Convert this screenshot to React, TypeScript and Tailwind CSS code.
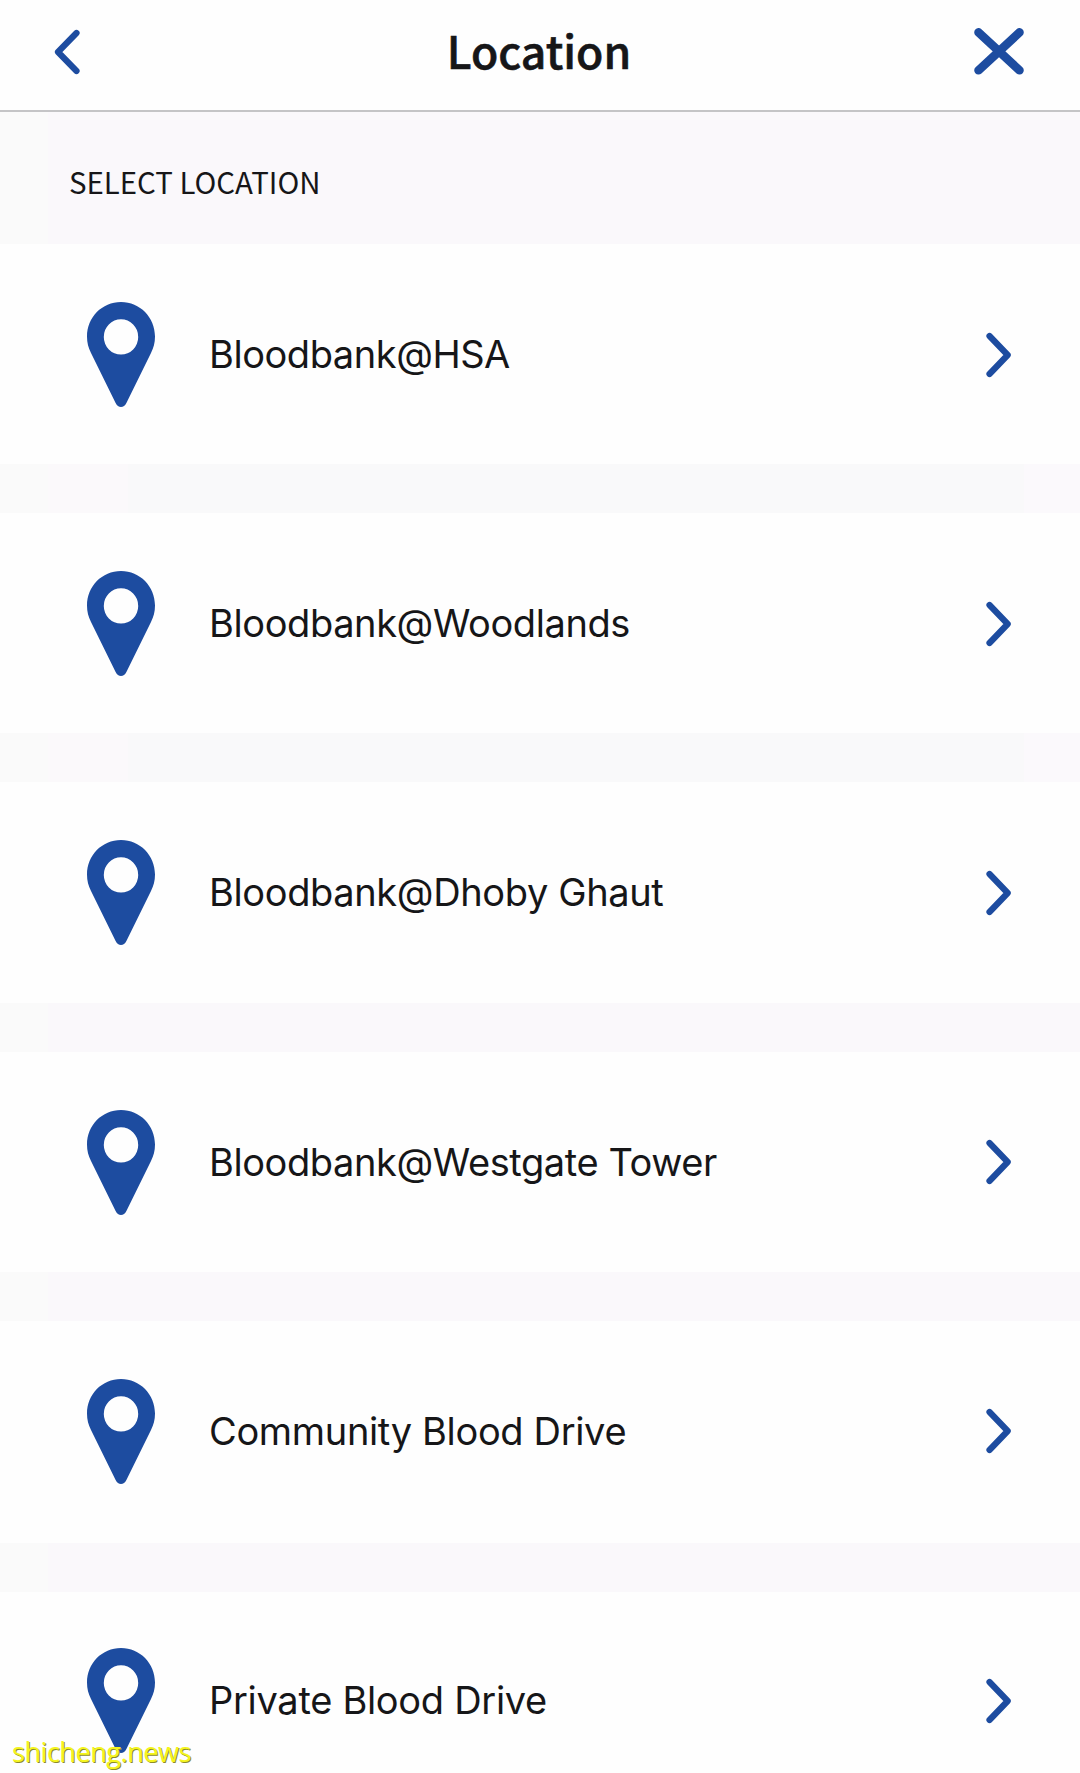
const BLUE = '#1d4ca0'

const LOCATIONS = [
  { name: 'Bloodbank@HSA', spacing: 'tracking-[-0.45px]', gap: 'bg-[linear-gradient(90deg,#fafafa_48px,#fbf9fb_48px,#fbf9fb_128px,#f9f9fa_128px,#f9f9fa_1024px,#fbf9fc_1024px)]' },
  { name: 'Bloodbank@Woodlands', spacing: 'tracking-[-0.4px]', gap: 'bg-[linear-gradient(90deg,#fafafa_48px,#fbf9fb_48px,#fbf9fb_128px,#f9f9fa_128px,#f9f9fa_1024px,#fbf9fc_1024px)]' },
  { name: 'Bloodbank@Dhoby Ghaut', spacing: 'tracking-[-0.37px]', gap: 'bg-[linear-gradient(90deg,#fafafa_48px,#faf8fb_48px)]' },
  { name: 'Bloodbank@Westgate Tower', spacing: 'tracking-[-0.41px]', gap: 'bg-[linear-gradient(90deg,#fafafa_48px,#faf8fb_48px)]' },
  { name: 'Community Blood Drive', spacing: 'tracking-[-0.34px]', gap: 'mt-[2px] bg-[linear-gradient(90deg,#fafafa_48px,#faf8fb_48px)]' },
  { name: 'Private Blood Drive', spacing: 'tracking-[-0.3px]', gap: '' },
]

function PinIcon() {
  return (
    <svg width="68" height="105" viewBox="0 0 68 105" className="mt-px shrink-0" fill={BLUE} fillRule="evenodd">
      <path d="M34 0C15 0 0 15.4 0 34.5C0 41 1.4 45.6 4 51L28.6 101C31 106.3 37 106.3 39.4 101L64 51C66.6 45.6 68 41 68 34.5C68 15.4 53 0 34 0ZM34 17.2A17.2 17.7 0 1 1 34 52.6A17.2 17.7 0 1 1 34 17.2Z" />
    </svg>
  )
}

function Chevron({ left = false }: { left?: boolean }) {
  return (
    <svg width="26" height="46" viewBox="0 0 26 46" className="mt-px shrink-0" fill="none" stroke={BLUE} strokeWidth="6.2" strokeLinecap="round" strokeLinejoin="round">
      <path d={left ? 'M22.5 4L4 23L22.5 42' : 'M3.5 4L21.7 23L3.5 42'} />
    </svg>
  )
}

function CloseIcon() {
  return (
    <svg width="50" height="48" viewBox="0 0 50 48" fill="none" stroke={BLUE} strokeWidth="8.6" strokeLinecap="round">
      <path d="M4.5 5.4L45.5 43.3M45.5 5.4L4.5 43.3" />
    </svg>
  )
}

export default function App() {
  return (
    <div className="relative h-[1773px] w-[1080px] overflow-hidden bg-[#fefefe] text-[#161618]">
      <header className="grid h-[112px] grid-cols-[1fr_auto_1fr] items-center border-b-2 border-[#c4c4c6] pr-[56px] pb-[8px] pl-[54px]">
        <button aria-label="Back" className="justify-self-start">
          <Chevron left />
        </button>
        <h1 className="pb-[2px] font-['Noto_Sans_CJK_SC',sans-serif] text-[44.5px] leading-none font-medium [-webkit-text-stroke:0.6px_#161618]">Location</h1>
        <button aria-label="Close" className="justify-self-end">
          <CloseIcon />
        </button>
      </header>

      <div className="flex h-[132px] items-center bg-[linear-gradient(90deg,#fafafa_48px,#faf8fb_48px)] pt-[8px] pl-[69px]">
        <h2 className="font-['Noto_Sans_CJK_SC',sans-serif] text-[29.4px] leading-none">SELECT LOCATION</h2>
      </div>

      <ul>
        {LOCATIONS.map((loc) => (
          <li key={loc.name} className="h-[269.2px]">
            <button className="flex h-[220.2px] w-full items-center pr-[68px] pl-[87px] text-left">
              <PinIcon />
              <span className={`ml-[54px] flex-1 font-['Inter',sans-serif] text-[38px] leading-none whitespace-nowrap ${loc.spacing}`}>
                {loc.name}
              </span>
              <Chevron />
            </button>
            <div className={`h-[49px] ${loc.gap}`} />
          </li>
        ))}
      </ul>

      <div className="absolute bottom-[8px] left-[12px] font-['Open_Sans',sans-serif] text-[27px] leading-none font-normal tracking-[-0.45px] text-[#f5f51e] [text-shadow:1px_1px_0_#8c8c28]">
        shicheng.news
      </div>
    </div>
  )
}
